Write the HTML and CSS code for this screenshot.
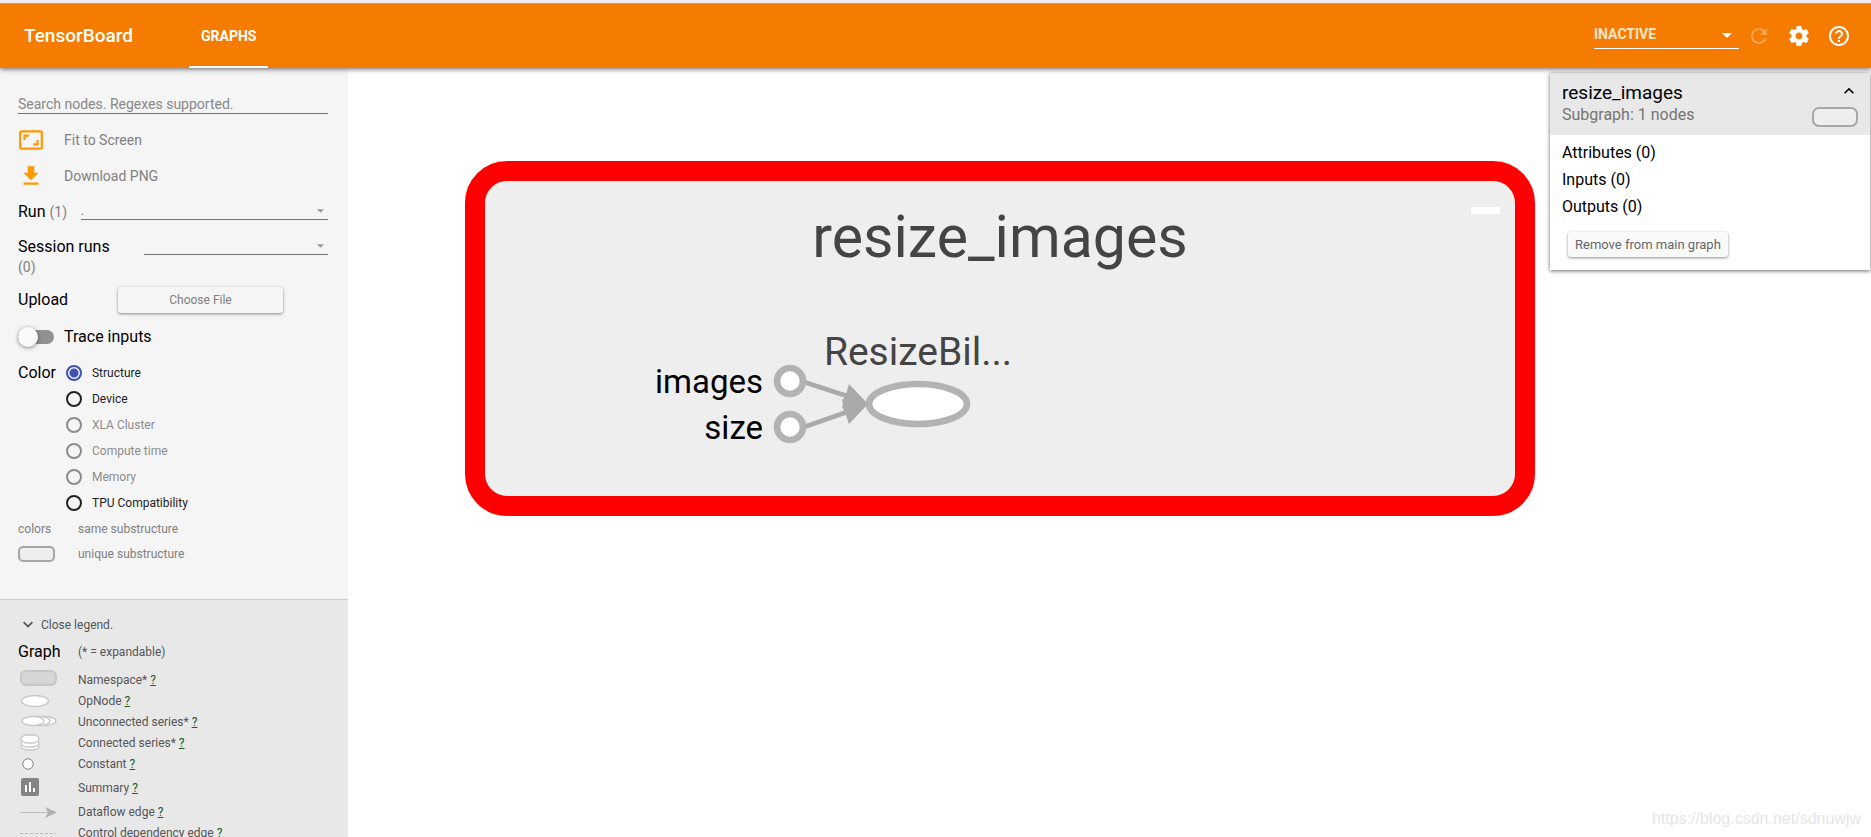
FILE: index.html
```html
<!DOCTYPE html>
<html lang="en">
<head>
<meta charset="utf-8">
<title>TensorBoard</title>
<link rel="stylesheet" href="styles.css">
</head>
<body>
<div class="app">
  <header class="toolbar">
    <h1 class="brand">TensorBoard</h1>
    <nav class="tabs"><button class="tab" type="button">GRAPHS</button></nav>
    <div class="actions">
      <div class="field inactive">
        <select class="select" aria-label="Inactive dashboards"><option>INACTIVE</option></select>
        <svg class="caret" viewBox="0 0 10 5" aria-hidden="true"><path d="M0 0h10L5 5z"/></svg>
      </div>
      <button class="icon-button" type="button" aria-label="Reload" disabled><svg viewBox="0 0 24 24"><path d="M17.65 6.35C16.2 4.9 14.21 4 12 4c-4.42 0-7.99 3.58-7.99 8s3.57 8 7.99 8c3.73 0 6.84-2.55 7.73-6h-2.08c-.82 2.33-3.04 4-5.65 4-3.31 0-6-2.69-6-6s2.69-6 6-6c1.66 0 3.14.69 4.22 1.78L13 11h7V4l-2.35 2.35z"/></svg></button>
      <button class="icon-button" type="button" aria-label="Settings"><svg viewBox="0 0 24 24"><path d="M19.43 12.98c.04-.32.07-.64.07-.98s-.03-.66-.07-.98l2.11-1.65c.19-.15.24-.42.12-.64l-2-3.46c-.12-.22-.39-.3-.61-.22l-2.49 1c-.52-.4-1.08-.73-1.69-.98l-.38-2.65C14.46 2.18 14.25 2 14 2h-4c-.25 0-.46.18-.49.42l-.38 2.65c-.61.25-1.17.59-1.69.98l-2.49-1c-.23-.09-.49 0-.61.22l-2 3.46c-.13.22-.07.49.12.64l2.11 1.65c-.04.32-.07.65-.07.98s.03.66.07.98l-2.11 1.65c-.19.15-.24.42-.12.64l2 3.46c.12.22.39.3.61.22l2.49-1c.52.4 1.08.73 1.69.98l.38 2.65c.03.24.24.42.49.42h4c.25 0 .46-.18.49-.42l.38-2.65c.61-.25 1.17-.59 1.69-.98l2.49 1c.23.09.49 0 .61-.22l2-3.46c.12-.22.07-.49-.12-.64l-2.11-1.65zM12 15.5c-1.93 0-3.5-1.57-3.5-3.5s1.57-3.5 3.5-3.5 3.5 1.57 3.5 3.5-1.57 3.5-3.5 3.5z"/></svg></button>
      <button class="icon-button" type="button" aria-label="Help"><svg viewBox="0 0 24 24"><path d="M11 18h2v-2h-2v2zm1-16C6.48 2 2 6.48 2 12s4.480 10 10 10 10-4.480 10-10S17.520 2 12 2zm0 18c-4.410 0-8-3.590-8-8s3.590-8 8-8 8 3.590 8 8-3.590 8-8 8zm0-14c-2.210 0-4 1.790-4 4h2c0-1.100.9-2 2-2s2 .9 2 2c0 2-3 1.750-3 5h2c0-2.250 3-2.500 3-5 0-2.210-1.790-4-4-4z"/></svg></button>
    </div>
  </header>

  <div class="workspace">
    <aside class="sidebar">
      <section class="controls">
        <input class="search" type="text" placeholder="Search nodes. Regexes supported." aria-label="Search nodes">
        <button class="row-action" type="button">
          <svg class="row-icon" viewBox="0 0 24 24"><path d="M19 12h-2v3h-3v2h5v-5zM7 9h3V7H5v5h2V9zm14-6H3c-1.100 0-2 .9-2 2v14c0 1.100.9 2 2 2h18c1.100 0 2-.9 2-2V5c0-1.100-.9-2-2-2zm0 16H3V5h18v14z"/></svg>
          Fit to Screen
        </button>
        <button class="row-action" type="button">
          <svg class="row-icon" viewBox="0 0 24 24"><path d="M19 9h-4V3H9v6H5l7 7 7-7zM5 18v2h14v-2H5z"/></svg>
          Download PNG
        </button>
        <div class="row run">
          <label class="title" for="run">Run <span class="count">(1)</span></label>
          <div class="field run-field">
            <select class="select" id="run"><option>.</option></select>
            <svg class="caret" viewBox="0 0 10 5" aria-hidden="true"><path d="M0 0h10L5 5z"/></svg>
          </div>
        </div>
        <div class="row session">
          <label class="title session-title" for="session">Session runs <span class="count">(0)</span></label>
          <div class="field session-field">
            <select class="select" id="session"><option></option></select>
            <svg class="caret" viewBox="0 0 10 5" aria-hidden="true"><path d="M0 0h10L5 5z"/></svg>
          </div>
        </div>
        <div class="row upload">
          <span class="title upload-title">Upload</span>
          <button class="raised choose" type="button">Choose File</button>
        </div>
        <label class="row trace"><input class="toggle" type="checkbox" role="switch"><span class="title">Trace inputs</span></label>
        <div class="row color">
          <span class="title" id="color-label">Color</span>
          <div class="radios" role="radiogroup" aria-labelledby="color-label">
            <label class="option"><input class="radio" type="radio" name="color" checked>Structure</label>
            <label class="option"><input class="radio" type="radio" name="color">Device</label>
            <label class="option off"><input class="radio" type="radio" name="color" disabled>XLA Cluster</label>
            <label class="option off"><input class="radio" type="radio" name="color" disabled>Compute time</label>
            <label class="option off"><input class="radio" type="radio" name="color" disabled>Memory</label>
            <label class="option"><input class="radio" type="radio" name="color">TPU Compatibility</label>
          </div>
        </div>
        <div class="key"><span>colors</span><span>same substructure</span></div>
        <div class="key"><span class="swatch"></span><span>unique substructure</span></div>
      </section>

      <section class="legend">
        <button class="legend-toggle" type="button">
          <svg class="chevron" viewBox="0 0 24 24"><path d="M7.410 7.840L12 12.420l4.590-4.580L18 9.250l-6 6-6-6z"/></svg>
          Close legend.
        </button>
        <div class="legend-head"><h2 class="title">Graph</h2><span>(* = expandable)</span></div>
        <div class="item"><svg class="glyph" viewBox="0 0 38 20"><rect x="1" y="1" width="35" height="14" rx="5" fill="#d6d6d6" stroke="#c6c6c6" stroke-width="2"/></svg><span>Namespace* <a href="#namespace">?</a></span></div>
        <div class="item"><svg class="glyph" viewBox="0 0 38 20"><ellipse cx="15" cy="10" rx="13.500" ry="5.500" fill="#fff" stroke="#c8c8c8" stroke-width="1.400"/></svg><span>OpNode <a href="#opnode">?</a></span></div>
        <div class="item"><svg class="glyph" viewBox="0 0 38 20"><g fill="#fff" stroke="#c8c8c8" stroke-width="1.300"><ellipse cx="25" cy="9" rx="11" ry="4.500"/><ellipse cx="19" cy="9" rx="11" ry="4.500"/><ellipse cx="13" cy="9" rx="11" ry="4.500"/></g></svg><span>Unconnected series* <a href="#unconnected">?</a></span></div>
        <div class="item"><svg class="glyph" viewBox="0 0 38 20"><g fill="#fff" stroke="#c8c8c8" stroke-width="1.300"><rect x="1" y="9" width="18" height="8" rx="6" ry="4"/><rect x="1" y="6" width="18" height="8" rx="6" ry="4"/><rect x="1" y="2" width="18" height="8" rx="6" ry="4"/></g></svg><span>Connected series* <a href="#connected">?</a></span></div>
        <div class="item"><svg class="glyph" viewBox="0 0 38 20"><circle cx="8" cy="10" r="5.200" fill="#fff" stroke="#848484"/></svg><span>Constant <a href="#constant">?</a></span></div>
        <div class="item tall"><svg class="glyph" viewBox="0 0 38 20"><rect x="1" width="18" height="18" rx="2" fill="#848484"/><path d="M5 7h2v7H5zM9 4h2v10H9zM13 10h2v4h-2z" fill="#fff"/></svg><span>Summary <a href="#summary">?</a></span></div>
        <div class="item"><svg class="glyph" viewBox="0 0 38 20"><path d="M0 10.500h28" stroke="#bbb"/><path d="M25 5l12 5.500-12 5.500 3-5.500z" fill="#b0b0b0"/></svg><span>Dataflow edge <a href="#dataflow">?</a></span></div>
        <div class="item"><svg class="glyph" viewBox="0 0 38 20"><path d="M0 10.500h36" stroke="#bbb" stroke-dasharray="3 2"/></svg><span>Control dependency edge <a href="#control">?</a></span></div>
      </section>
    </aside>

    <main class="graph">
      <svg class="canvas" viewBox="348 68 1523 769" role="img" aria-label="resize_images subgraph">
        <rect x="475" y="171" width="1050" height="335" rx="32" fill="#eee" stroke="red" stroke-width="20"/>
        <path d="M1471 207h29v7h-29z" fill="#fff"/>
        <text class="scope" x="1000" y="257">resize_images</text>
        <text class="op" x="918" y="365">ResizeBil...</text>
        <text class="input" x="763" y="393">images</text>
        <text class="input" x="763" y="439">size</text>
        <g stroke="#aaa" stroke-width="4.500"><path d="M804 382L850 397M804 427L850 411"/></g>
        <path d="M849 384L868 404L849 424L845 412L842 407L843 404L842 400L845 397z" fill="#aaa"/>
        <g fill="#fff" stroke="#b3b3b3" stroke-width="6.600"><circle cx="790" cy="381" r="13"/><circle cx="790" cy="427" r="13"/><ellipse cx="918" cy="404" rx="49" ry="20"/></g>
      </svg>
      <section class="info">
        <div class="info-head">
          <div><h2 class="info-title">resize_images</h2><p class="info-sub">Subgraph: 1 nodes</p></div>
          <div class="info-side">
            <button class="collapse" type="button" aria-label="Collapse"><svg class="chevron" viewBox="0 0 24 24"><path d="M7.410 15.410L12 10.830l4.590 4.580L18 14l-6-6-6 6z"/></svg></button>
            <span class="node-shape"></span>
          </div>
        </div>
        <div class="info-body">
          <h3 class="group">Attributes (0)</h3>
          <h3 class="group">Inputs (0)</h3>
          <h3 class="group">Outputs (0)</h3>
          <button class="raised remove" type="button">Remove from main graph</button>
        </div>
      </section>
      <span class="watermark">https://blog.csdn.net/sdnuwjw</span>
    </main>
  </div>
</div>
</body>
</html>
```
FILE: styles.css
```css
* { box-sizing: border-box; }
body { margin: 0; font-family: Roboto, "Liberation Sans", sans-serif; color: #212121; }
h1, h2, h3, p { margin: 0; font-weight: 400; }
button { font: inherit; color: inherit; background: none; border: 0; padding: 0; text-align: left; }
svg { display: block; fill: currentColor; }

.app { height: 100vh; display: flex; flex-direction: column; overflow: hidden; border-top: 3px solid #ececf0; }
.toolbar { position: relative; z-index: 2; flex: none; display: flex; height: 65px; padding: 0 20px 0 24px; background: #f57c00; color: #fff; border-top: 1px solid #b0a8a0; box-shadow: 0 1px 5px rgba(0,0,0,.6); }
.brand { font-size: 19px; line-height: 64px; font-weight: 500; width: 165px; }
.tab { height: 64px; padding: 2px 12px 0; font-size: 14px; font-weight: 700; border-bottom: 2px solid #fff; }
.actions { margin-left: auto; display: flex; align-items: center; gap: 16px; }
.icon-button svg { width: 24px; height: 24px; }
.icon-button:disabled { opacity: .3; }

.field { position: relative; display: flex; border-bottom: 1px solid #737373; }
.select { appearance: none; width: 100%; height: 17px; padding: 0; border: 0; border-radius: 0; background: none; font: inherit; font-size: 12px; color: #757575; }
.caret { position: absolute; right: 4px; top: 7px; width: 7px; height: 4px; color: #999; pointer-events: none; }
.inactive { width: 145px; margin: 0 -8px 4px 0; border-color: #fff; }
.inactive .select { height: 28px; font-size: 14px; font-weight: 700; color: #ffe5cc; }
.inactive .caret { right: 7px; top: 13px; width: 10px; height: 5px; color: #fff; }

.workspace { flex: 1; min-height: 0; display: flex; }
.sidebar { width: 348px; flex: none; display: flex; flex-direction: column; background: #f5f5f5; font-size: 12px; }
.controls { flex: none; display: flex; flex-direction: column; height: 531px; padding: 25px 20px 0 18px; }
.title { font-size: 16px; line-height: 20px; color: #000; font-weight: 400; }
.count { font-size: 14px; color: #808080; }
.search { width: 100%; height: 21px; padding: 2px 0 0; border: 0; border-bottom: 1px solid #737373; background: none; font: inherit; font-size: 14px; }
.search::placeholder { color: #888; opacity: 1; }
.row-action { display: flex; align-items: center; gap: 20px; height: 24px; margin-top: 14px; font-size: 14px; color: #808080; }
.row-action + .row-action { margin-top: 12px; }
.row-icon { width: 26px; height: 26px; color: #ff9800; }
.row { display: flex; }
.run { margin-top: 14px; justify-content: space-between; align-items: flex-start; }
.run-field { width: 247px; }
.session { margin-top: 15px; justify-content: space-between; align-items: flex-start; }
.session-title { width: 110px; }
.session-field { width: 184px; }
.upload { margin-top: 10px; height: 26px; align-items: center; }
.upload-title { width: 100px; }
.raised { height: 26px; font-size: 13px; color: #808080; text-align: center; border-radius: 3px; box-shadow: 0 1px 3px rgba(0,0,0,.45); }
.choose { width: 165px; font-size: 12px; }
.trace { margin-top: 14px; align-items: center; gap: 10px; }
.toggle { appearance: none; position: relative; width: 36px; height: 14px; margin: 0; border-radius: 7px; background: #919191; }
.toggle::before { content: ""; position: absolute; left: 0; top: -3px; width: 20px; height: 20px; border-radius: 50%; background: #fafafa; box-shadow: 0 1px 4px rgba(0,0,0,.45); }
.color { margin-top: 13px; gap: 10px; }
.color .title { line-height: 26px; }
.option { display: flex; align-items: center; gap: 10px; height: 26px; font-size: 12px; }
.radio { appearance: none; width: 16px; height: 16px; margin: 0; border: 2px solid #212121; border-radius: 50%; }
.radio:checked { border-color: #3f51b5; background: radial-gradient(circle, #3f51b5 4px, transparent 5px); }
.off { color: #8c8c8c; }
.off .radio { border-color: #8c8c8c; }
.key { display: grid; grid-template-columns: 60px 1fr; align-items: center; height: 25px; color: #808080; }
.swatch { width: 37px; height: 16px; border: 2px solid #a6a6a6; border-radius: 5px; background: #eee; }

.legend { flex: 1; min-height: 0; overflow: hidden; padding: 15px 18px 0; background: #e8e8e8; border-top: 1px solid #c9c9c9; color: #555; }
.legend-toggle { display: flex; align-items: center; gap: 3px; height: 20px; }
.chevron { width: 20px; height: 20px; }
.legend-head { display: grid; grid-template-columns: 60px 1fr; align-items: center; height: 34px; }
.item { display: grid; grid-template-columns: 58px 1fr; align-items: center; height: 21px; padding-left: 2px; }
.tall { height: 27px; }
.glyph { width: 38px; height: 20px; }
.item a { color: #1b5e20; }

.graph { position: relative; flex: 1; min-width: 0; overflow: hidden; background: #fff; }
.canvas { width: 100%; height: auto; }
.scope, .op { fill: #444; text-anchor: middle; }
.scope { font-size: 59px; }
.op { font-size: 39px; }
.input { font-size: 33px; fill: #000; text-anchor: end; }

.info { position: absolute; top: 5px; right: 1px; width: 320px; background: #fff; color: #000; box-shadow: 0 1px 4px rgba(0,0,0,.6); }
.info-head { display: flex; justify-content: space-between; padding: 8px 12px; background: #e8e8e8; }
.info-title { font-size: 19px; line-height: 24px; }
.info-sub { font-size: 16px; line-height: 20px; color: #757575; }
.info-side { display: flex; flex-direction: column; align-items: flex-end; gap: 6px; }
.collapse { margin-right: -1px; }
.node-shape { width: 46px; height: 20px; border: 2px solid #a6a6a6; border-radius: 7px; background: #eee; }
.info-body { padding: 4px 12px 13px; }
.group { font-size: 16px; line-height: 27px; }
.remove { display: block; margin: 12px 0 0 6px; padding: 0 7px; background: #fafafa; color: #666; height: 25px; }
.watermark { position: absolute; right: 10px; bottom: 8px; font-family: "Liberation Sans", Arial, sans-serif; font-size: 16px; line-height: 20px; color: #e6e6e6; }
```
